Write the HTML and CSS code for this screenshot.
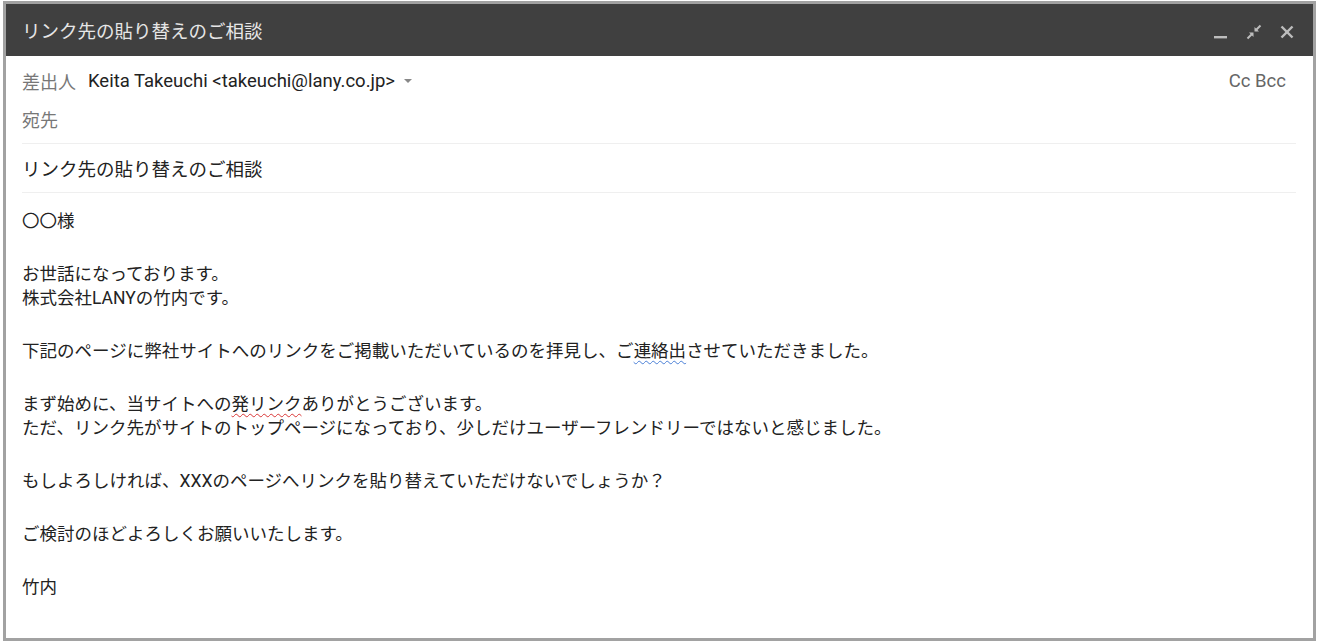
FILE: index.html
```html
<!DOCTYPE html>
<html lang="ja">
<head>
    <meta charset="UTF-8">
    <title>リンク先の貼り替えのご相談</title>
    <link rel="stylesheet" href="styles.css">
</head>
<body>
    <div class="compose">
        <!-- タイトルバー -->
        <div class="title-bar">
            <span class="title">リンク先の貼り替えのご相談</span>
            <div class="window-buttons">
                <svg class="win-icon" width="16" height="16" viewBox="0 0 16 16">
                    <rect x="1" y="12" width="13" height="2.4" fill="#bdbdbd"/>
                </svg>
                <svg class="win-icon" width="16" height="16" viewBox="0 0 16 16">
                    <g stroke="#bdbdbd" stroke-width="2" fill="none">
                        <path d="M14.5 1.5 L9.5 6.5"/>
                        <path d="M1.5 14.5 L6.5 9.5"/>
                    </g>
                    <path d="M8.5 3 L8.5 7.5 L13 7.5 Z" fill="#bdbdbd"/>
                    <path d="M7.5 13 L7.5 8.5 L3 8.5 Z" fill="#bdbdbd"/>
                </svg>
                <svg class="win-icon" width="16" height="16" viewBox="0 0 16 16">
                    <g stroke="#bdbdbd" stroke-width="2.4">
                        <path d="M2.5 2.5 L13.5 13.5"/>
                        <path d="M13.5 2.5 L2.5 13.5"/>
                    </g>
                </svg>
            </div>
        </div>

        <div class="fields">
            <!-- 差出人 -->
            <div class="field-row">
                <span class="label">差出人</span>
                <span class="from">Keita Takeuchi &lt;takeuchi@lany.co.jp&gt;</span>
                <span class="caret"></span>
                <span class="cc">Cc Bcc</span>
            </div>
            <!-- 宛先 -->
            <div class="field-row to-row">
                <span class="label">宛先</span>
            </div>
            <!-- 件名 -->
            <div class="subject">リンク先の貼り替えのご相談</div>
        </div>

        <!-- 本文 -->
        <div class="body-text">
            <p>〇〇様</p>
            <p>お世話になっております。<br>株式会社LANYの竹内です。</p>
            <p>下記のページに弊社サイトへのリンクをご掲載いただいているのを拝見し、ご<span class="spell-blue">連絡出</span>させていただきました。</p>
            <p>まず始めに、当サイトへの<span class="spell-red">発リンク</span>ありがとうございます。<br>ただ、リンク先がサイトのトップページになっており、少しだけユーザーフレンドリーではないと感じました。</p>
            <p>もしよろしければ、XXXのページへリンクを貼り替えていただけないでしょうか？</p>
            <p>ご検討のほどよろしくお願いいたします。</p>
            <p>竹内</p>
        </div>
    </div>
</body>
</html>
```

FILE: styles.css
```css
/* 基本 */
body {
    margin: 0;
    background-color: #ffffff;
    font-family: Roboto, "Noto Sans CJK JP", sans-serif;
}

/* 作成ウィンドウ */
.compose {
    box-sizing: border-box;
    width: 1313px;
    height: 640px;
    margin: 1px 0 0 3px;
    border: 3px solid #a2a2a2;
    background-color: #ffffff;
}

/* タイトルバー */
.title-bar {
    height: 52px;
    background-color: #404040;
    display: flex;
    align-items: center;
    justify-content: space-between;
    padding: 0 17px 0 16px;
}

.title {
    color: #e6e6e6;
    font-size: 18.5px;
}

.window-buttons {
    display: flex;
    align-items: center;
    gap: 17px;
    padding-top: 4px;
    padding-right: 1px;
}

/* ヘッダー欄 */
.fields {
    padding: 0 17px 0 16px;
}

.field-row {
    display: flex;
    align-items: center;
    height: 40px;
    font-size: 18.5px;
    padding-top: 5px;
}

.to-row {
    height: 36px;
    padding-top: 0;
    padding-bottom: 6px;
    border-bottom: 1px solid #efefef;
}

.label {
    color: #777777;
    font-size: 18px;
    margin-right: 12px;
}

.from {
    color: #222222;
}

.caret {
    width: 0;
    height: 0;
    margin-left: 9px;
    border-left: 4px solid transparent;
    border-right: 4px solid transparent;
    border-top: 4px solid #888888;
}

.cc {
    margin-left: auto;
    color: #666666;
    margin-right: 10px;
}

.subject {
    height: 43px;
    line-height: 43px;
    padding-top: 5px;
    font-size: 18.5px;
    color: #222222;
    border-bottom: 1px solid #efefef;
}

/* 本文 */
.body-text {
    padding: 16px 17px 0 16px;
    font-size: 17.5px;
    color: #222222;
}

.body-text p {
    margin: 0 0 29px;
    line-height: 24px;
}

.spell-blue {
    text-decoration: underline wavy #4a7fd6;
    text-decoration-thickness: 1px;
    text-underline-offset: 3px;
}

.spell-red {
    text-decoration: underline wavy #d93636;
    text-decoration-thickness: 1px;
    text-underline-offset: 3px;
}
```
